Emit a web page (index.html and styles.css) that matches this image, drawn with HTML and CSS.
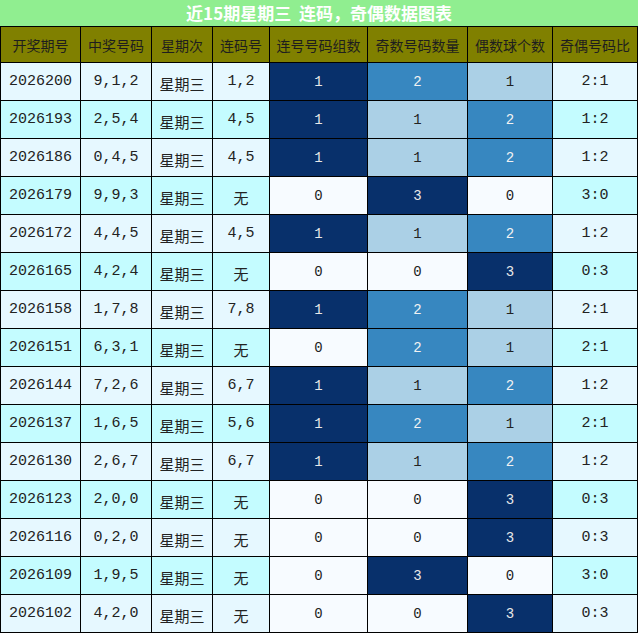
FILE: index.html
```html
<!DOCTYPE html>
<html lang="zh">
<head>
<meta charset="utf-8">
<title>近15期星期三 连码，奇偶数据图表</title>
<link rel="stylesheet" href="styles.css">
</head>
<body>
<div class="title">近15期星期三&nbsp;&nbsp;连码，奇偶数据图表</div>
<table class="grid">
<colgroup>
<col class="w80"><col class="w71"><col class="w61"><col class="w57"><col class="w98"><col class="w100"><col class="w85"><col class="w85">
</colgroup>
<thead>
<tr><th>开奖期号</th><th>中奖号码</th><th>星期次</th><th>连码号</th><th>连号号码组数</th><th>奇数号码数量</th><th>偶数球个数</th><th>奇偶号码比</th></tr>
</thead>
<tbody>
<tr class="ra"><td>2026200</td><td>9,1,2</td><td class="zh">星期三</td><td>1,2</td><td class="c3">1</td><td class="c2">2</td><td class="c1">1</td><td>2:1</td></tr>
<tr class="rb"><td>2026193</td><td>2,5,4</td><td class="zh">星期三</td><td>4,5</td><td class="c3">1</td><td class="c1">1</td><td class="c2">2</td><td>1:2</td></tr>
<tr class="ra"><td>2026186</td><td>0,4,5</td><td class="zh">星期三</td><td>4,5</td><td class="c3">1</td><td class="c1">1</td><td class="c2">2</td><td>1:2</td></tr>
<tr class="rb"><td>2026179</td><td>9,9,3</td><td class="zh">星期三</td><td class="zh">无</td><td class="c0">0</td><td class="c3">3</td><td class="c0">0</td><td>3:0</td></tr>
<tr class="ra"><td>2026172</td><td>4,4,5</td><td class="zh">星期三</td><td>4,5</td><td class="c3">1</td><td class="c1">1</td><td class="c2">2</td><td>1:2</td></tr>
<tr class="rb"><td>2026165</td><td>4,2,4</td><td class="zh">星期三</td><td class="zh">无</td><td class="c0">0</td><td class="c0">0</td><td class="c3">3</td><td>0:3</td></tr>
<tr class="ra"><td>2026158</td><td>1,7,8</td><td class="zh">星期三</td><td>7,8</td><td class="c3">1</td><td class="c2">2</td><td class="c1">1</td><td>2:1</td></tr>
<tr class="rb"><td>2026151</td><td>6,3,1</td><td class="zh">星期三</td><td class="zh">无</td><td class="c0">0</td><td class="c2">2</td><td class="c1">1</td><td>2:1</td></tr>
<tr class="ra"><td>2026144</td><td>7,2,6</td><td class="zh">星期三</td><td>6,7</td><td class="c3">1</td><td class="c1">1</td><td class="c2">2</td><td>1:2</td></tr>
<tr class="rb"><td>2026137</td><td>1,6,5</td><td class="zh">星期三</td><td>5,6</td><td class="c3">1</td><td class="c2">2</td><td class="c1">1</td><td>2:1</td></tr>
<tr class="ra"><td>2026130</td><td>2,6,7</td><td class="zh">星期三</td><td>6,7</td><td class="c3">1</td><td class="c1">1</td><td class="c2">2</td><td>1:2</td></tr>
<tr class="rb"><td>2026123</td><td>2,0,0</td><td class="zh">星期三</td><td class="zh">无</td><td class="c0">0</td><td class="c0">0</td><td class="c3">3</td><td>0:3</td></tr>
<tr class="ra"><td>2026116</td><td>0,2,0</td><td class="zh">星期三</td><td class="zh">无</td><td class="c0">0</td><td class="c0">0</td><td class="c3">3</td><td>0:3</td></tr>
<tr class="rb"><td>2026109</td><td>1,9,5</td><td class="zh">星期三</td><td class="zh">无</td><td class="c0">0</td><td class="c3">3</td><td class="c0">0</td><td>3:0</td></tr>
<tr class="ra"><td>2026102</td><td>4,2,0</td><td class="zh">星期三</td><td class="zh">无</td><td class="c0">0</td><td class="c0">0</td><td class="c3">3</td><td>0:3</td></tr>
</tbody>
</table>
</body>
</html>
```
FILE: styles.css
```css
html, body {
  margin: 0;
  padding: 0;
  background: #ffffff;
}
.title {
  height: 26px;
  line-height: 26px;
  background: #90ee90;
  color: #ffffff;
  font-family: "Noto Sans CJK SC", "Noto Sans", sans-serif;
  font-weight: bold;
  font-size: 17px;
  text-align: center;
  width: 638px;
}
.grid {
  width: 638px;
  table-layout: fixed;
  border-collapse: collapse;
  border: 1px solid #000;
}
.w80 { width: 80px; }
.w71 { width: 71px; }
.w61 { width: 61px; }
.w57 { width: 57px; }
.w98 { width: 98px; }
.w100 { width: 100px; }
.w85 { width: 85px; }
.grid th, .grid td {
  border: 1px solid #000;
  padding: 0;
  text-align: center;
  overflow: hidden;
  white-space: nowrap;
}
.grid thead tr { height: 36px; }
.grid th {
  background: #808000;
  color: #1e1e1e;
  font-family: "Noto Sans CJK SC", sans-serif;
  font-weight: normal;
  font-size: 14px;
}
.grid tbody tr { height: 38px; }
.grid td {
  font-family: "Liberation Mono", "Noto Sans CJK SC", monospace;
  font-size: 15px;
  color: #222;
}
.grid td.zh {
  font-family: "Noto Sans CJK SC", sans-serif;
  font-size: 15px;
  padding-top: 3px;
}
.ra td { background: #e6f8ff; }
.rb td { background: #c4fcff; }
.grid td.c0 { background: #f7fbff; color: #222; font-size: 14px; }
.grid td.c1 { background: #abd0e6; color: #222; font-size: 14px; }
.grid td.c2 { background: #3787c0; color: #f2f2f2; font-size: 14px; }
.grid td.c3 { background: #08306b; color: #e8e8e8; font-size: 14px; }
```
